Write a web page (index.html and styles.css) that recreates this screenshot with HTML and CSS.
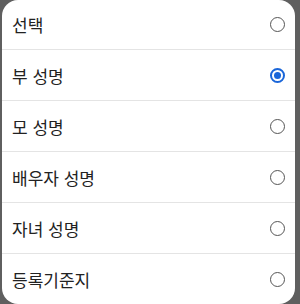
FILE: index.html
```html
<!DOCTYPE html>
<html lang="ko">
<head>
    <meta charset="UTF-8">
    <meta name="viewport" content="width=device-width, initial-scale=1.0">
    <title>선택</title>
    <link rel="stylesheet" href="styles.css">
</head>
<body>
    <div class="sheet">
        <ul class="option-list">
            <li class="option"><span>선택</span><span class="radio"></span></li>
            <li class="option"><span>부 성명</span><span class="radio checked"></span></li>
            <li class="option"><span>모 성명</span><span class="radio"></span></li>
            <li class="option"><span>배우자 성명</span><span class="radio"></span></li>
            <li class="option"><span>자녀 성명</span><span class="radio"></span></li>
            <li class="option"><span>등록기준지</span><span class="radio"></span></li>
        </ul>
    </div>
</body>
</html>
```

FILE: styles.css
```css
body {
    margin: 0;
    padding: 0;
    background: #5f5f5f;
    font-family: "Noto Sans CJK KR", "Noto Sans", sans-serif;
    height: 304px;
    overflow: hidden;
}
.sheet {
    background: #fff;
    margin: 0 5px 0 2px;
    height: 304px;
    border-radius: 16px;
    overflow: hidden;
}
.option-list {
    list-style: none;
    margin: 0;
    padding: 0;
}
.option {
    display: flex;
    align-items: center;
    justify-content: space-between;
    height: 51px;
    box-sizing: border-box;
    padding: 0 10px 0 10px;
    border-bottom: 1px solid #e4e4e4;
    font-size: 17px;
    color: #222;
}
.option:first-child {
    height: 50px;
}
.option:last-child {
    border-bottom: none;
}
.radio {
    width: 15px;
    height: 15px;
    box-sizing: border-box;
    border: 1.8px solid #555;
    border-radius: 50%;
    position: relative;
}
.radio.checked {
    border: 2px solid #1a66d9;
}
.radio.checked::after {
    content: "";
    position: absolute;
    left: 2px;
    top: 2px;
    width: 7px;
    height: 7px;
    border-radius: 50%;
    background: #1a66d9;
}
```
